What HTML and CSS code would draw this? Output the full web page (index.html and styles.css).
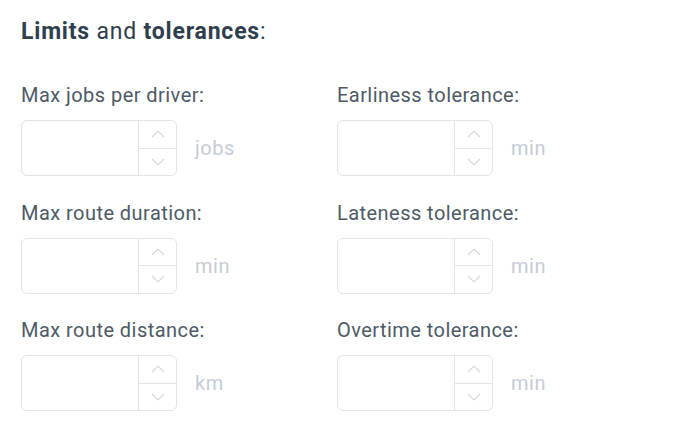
FILE: index.html
```html
<!DOCTYPE html>
<html lang="en">
<head>
<meta charset="utf-8">
<title>Limits and tolerances</title>
<link rel="stylesheet" href="styles.css">
</head>
<body>
<section class="panel">
  <h2 class="title"><b>Limits</b> and <b>tolerances</b>:</h2>
  <div class="grid">
    <div class="field">
      <label class="label">Max jobs per driver:</label>
      <div class="control">
        <div class="spin">
          <input class="num" type="text">
          <div class="arrows">
            <span class="arrow"><svg viewBox="0 0 14 8" width="14" height="8"><path d="M1 7 L7 1 L13 7"/></svg></span>
            <span class="arrow"><svg viewBox="0 0 14 8" width="14" height="8"><path d="M1 1 L7 7 L13 1"/></svg></span>
          </div>
        </div>
        <span class="unit">jobs</span>
      </div>
    </div>
    <div class="field">
      <label class="label">Earliness tolerance:</label>
      <div class="control">
        <div class="spin">
          <input class="num" type="text">
          <div class="arrows">
            <span class="arrow"><svg viewBox="0 0 14 8" width="14" height="8"><path d="M1 7 L7 1 L13 7"/></svg></span>
            <span class="arrow"><svg viewBox="0 0 14 8" width="14" height="8"><path d="M1 1 L7 7 L13 1"/></svg></span>
          </div>
        </div>
        <span class="unit">min</span>
      </div>
    </div>
    <div class="field">
      <label class="label">Max route duration:</label>
      <div class="control">
        <div class="spin">
          <input class="num" type="text">
          <div class="arrows">
            <span class="arrow"><svg viewBox="0 0 14 8" width="14" height="8"><path d="M1 7 L7 1 L13 7"/></svg></span>
            <span class="arrow"><svg viewBox="0 0 14 8" width="14" height="8"><path d="M1 1 L7 7 L13 1"/></svg></span>
          </div>
        </div>
        <span class="unit">min</span>
      </div>
    </div>
    <div class="field">
      <label class="label">Lateness tolerance:</label>
      <div class="control">
        <div class="spin">
          <input class="num" type="text">
          <div class="arrows">
            <span class="arrow"><svg viewBox="0 0 14 8" width="14" height="8"><path d="M1 7 L7 1 L13 7"/></svg></span>
            <span class="arrow"><svg viewBox="0 0 14 8" width="14" height="8"><path d="M1 1 L7 7 L13 1"/></svg></span>
          </div>
        </div>
        <span class="unit">min</span>
      </div>
    </div>
    <div class="field">
      <label class="label">Max route distance:</label>
      <div class="control">
        <div class="spin">
          <input class="num" type="text">
          <div class="arrows">
            <span class="arrow"><svg viewBox="0 0 14 8" width="14" height="8"><path d="M1 7 L7 1 L13 7"/></svg></span>
            <span class="arrow"><svg viewBox="0 0 14 8" width="14" height="8"><path d="M1 1 L7 7 L13 1"/></svg></span>
          </div>
        </div>
        <span class="unit">km</span>
      </div>
    </div>
    <div class="field">
      <label class="label">Overtime tolerance:</label>
      <div class="control">
        <div class="spin">
          <input class="num" type="text">
          <div class="arrows">
            <span class="arrow"><svg viewBox="0 0 14 8" width="14" height="8"><path d="M1 7 L7 1 L13 7"/></svg></span>
            <span class="arrow"><svg viewBox="0 0 14 8" width="14" height="8"><path d="M1 1 L7 7 L13 1"/></svg></span>
          </div>
        </div>
        <span class="unit">min</span>
      </div>
    </div>
  </div>
</section>
</body>
</html>
```
FILE: styles.css
```css
html, body {
  margin: 0;
  background: #ffffff;
}
body {
  font-family: Roboto, "Liberation Sans", sans-serif;
}
.panel {
  padding: 18px 0 0 21px;
}
.title {
  margin: 0;
  font-size: 23px;
  line-height: 27px;
  letter-spacing: 0.8px;
  font-weight: 400;
  color: #2f3e4d;
}
.title b {
  font-weight: 700;
}
.grid {
  margin-top: 39px;
  display: grid;
  grid-template-columns: 316px 316px;
  row-gap: 25.5px;
}
.field {
  display: flex;
  flex-direction: column;
}
.label {
  font-size: 20px;
  line-height: 23px;
  letter-spacing: 0.45px;
  color: #4d5a66;
  margin-bottom: 13px;
}
.control {
  display: flex;
  align-items: center;
}
.spin {
  display: flex;
  width: 154px;
  height: 54px;
  border: 1px solid #e0e5eb;
  border-radius: 6px;
  overflow: hidden;
}
.num {
  flex: 1;
  min-width: 0;
  border: 0;
  outline: 0;
  padding: 0 10px;
  margin: 0;
  font: inherit;
  background: transparent;
}
.arrows {
  width: 37px;
  display: flex;
  flex-direction: column;
  border-left: 1px solid #e0e5eb;
}
.arrow {
  flex: 1;
  display: flex;
  align-items: center;
  justify-content: center;
}
.arrow + .arrow {
  border-top: 1px solid #e0e5eb;
}
.arrow svg {
  display: block;
}
.arrow path {
  fill: none;
  stroke: #d3d9e1;
  stroke-width: 1.2;
}
.unit {
  margin-left: 18px;
  font-size: 20px;
  letter-spacing: 0.5px;
  color: #c6ccd6;
}
```
